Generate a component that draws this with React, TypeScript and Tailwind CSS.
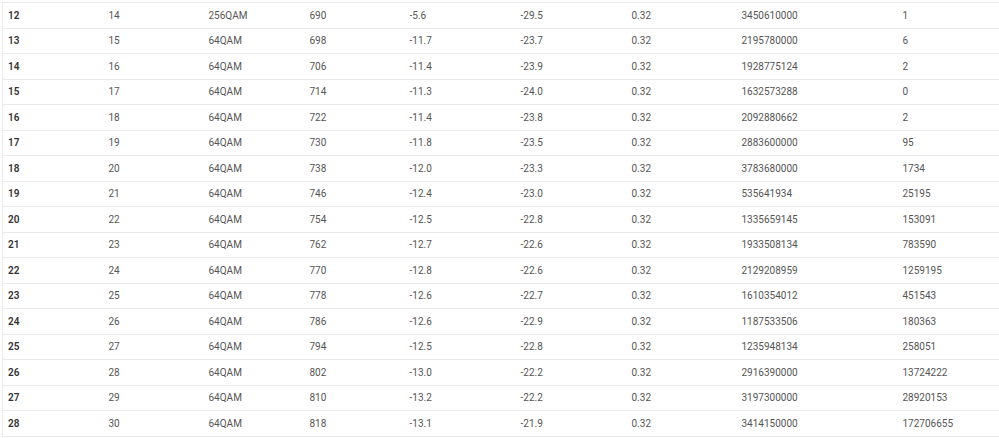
const rows: string[][] = [
  ["12", "14", "256QAM", "690", "-5.6", "-29.5", "0.32", "3450610000", "1"],
  ["13", "15", "64QAM", "698", "-11.7", "-23.7", "0.32", "2195780000", "6"],
  ["14", "16", "64QAM", "706", "-11.4", "-23.9", "0.32", "1928775124", "2"],
  ["15", "17", "64QAM", "714", "-11.3", "-24.0", "0.32", "1632573288", "0"],
  ["16", "18", "64QAM", "722", "-11.4", "-23.8", "0.32", "2092880662", "2"],
  ["17", "19", "64QAM", "730", "-11.8", "-23.5", "0.32", "2883600000", "95"],
  ["18", "20", "64QAM", "738", "-12.0", "-23.3", "0.32", "3783680000", "1734"],
  ["19", "21", "64QAM", "746", "-12.4", "-23.0", "0.32", "535641934", "25195"],
  ["20", "22", "64QAM", "754", "-12.5", "-22.8", "0.32", "1335659145", "153091"],
  ["21", "23", "64QAM", "762", "-12.7", "-22.6", "0.32", "1933508134", "783590"],
  ["22", "24", "64QAM", "770", "-12.8", "-22.6", "0.32", "2129208959", "1259195"],
  ["23", "25", "64QAM", "778", "-12.6", "-22.7", "0.32", "1610354012", "451543"],
  ["24", "26", "64QAM", "786", "-12.6", "-22.9", "0.32", "1187533506", "180363"],
  ["25", "27", "64QAM", "794", "-12.5", "-22.8", "0.32", "1235948134", "258051"],
  ["26", "28", "64QAM", "802", "-13.0", "-22.2", "0.32", "2916390000", "13724222"],
  ["27", "29", "64QAM", "810", "-13.2", "-22.2", "0.32", "3197300000", "28920153"],
  ["28", "30", "64QAM", "818", "-13.1", "-21.9", "0.32", "3414150000", "172706655"],
];

// column widths measured from the screenshot
const widths = ["w-[101px]", "w-[100px]", "w-[101px]", "w-[100px]", "w-[111px]", "w-[111px]", "w-[110px]", "w-[161px]", "w-auto"];

export default function App() {
  return (
    <div className="bg-white w-[999px] h-[438px] overflow-hidden pt-[2px] pl-[2px] font-['Roboto',sans-serif]">
      <table className="w-[997px] table-fixed border-collapse border-l border-t border-[#ebebeb] text-[10px] text-[#555]">
        <colgroup>
          {widths.map((w, i) => (
            <col key={i} className={w} />
          ))}
        </colgroup>
        <tbody>
          {rows.map((r) => (
            <tr key={r[0]} className="h-[25.5px] border-b border-[#ebebeb]">
              {r.map((c, i) => (
                <td
                  key={i}
                  className={
                    i === 0
                      ? "pl-[5px] py-0 align-middle font-semibold text-[#333]"
                      : "pl-[5px] py-0 align-middle"
                  }
                >
                  {c}
                </td>
              ))}
            </tr>
          ))}
        </tbody>
      </table>
    </div>
  );
}
